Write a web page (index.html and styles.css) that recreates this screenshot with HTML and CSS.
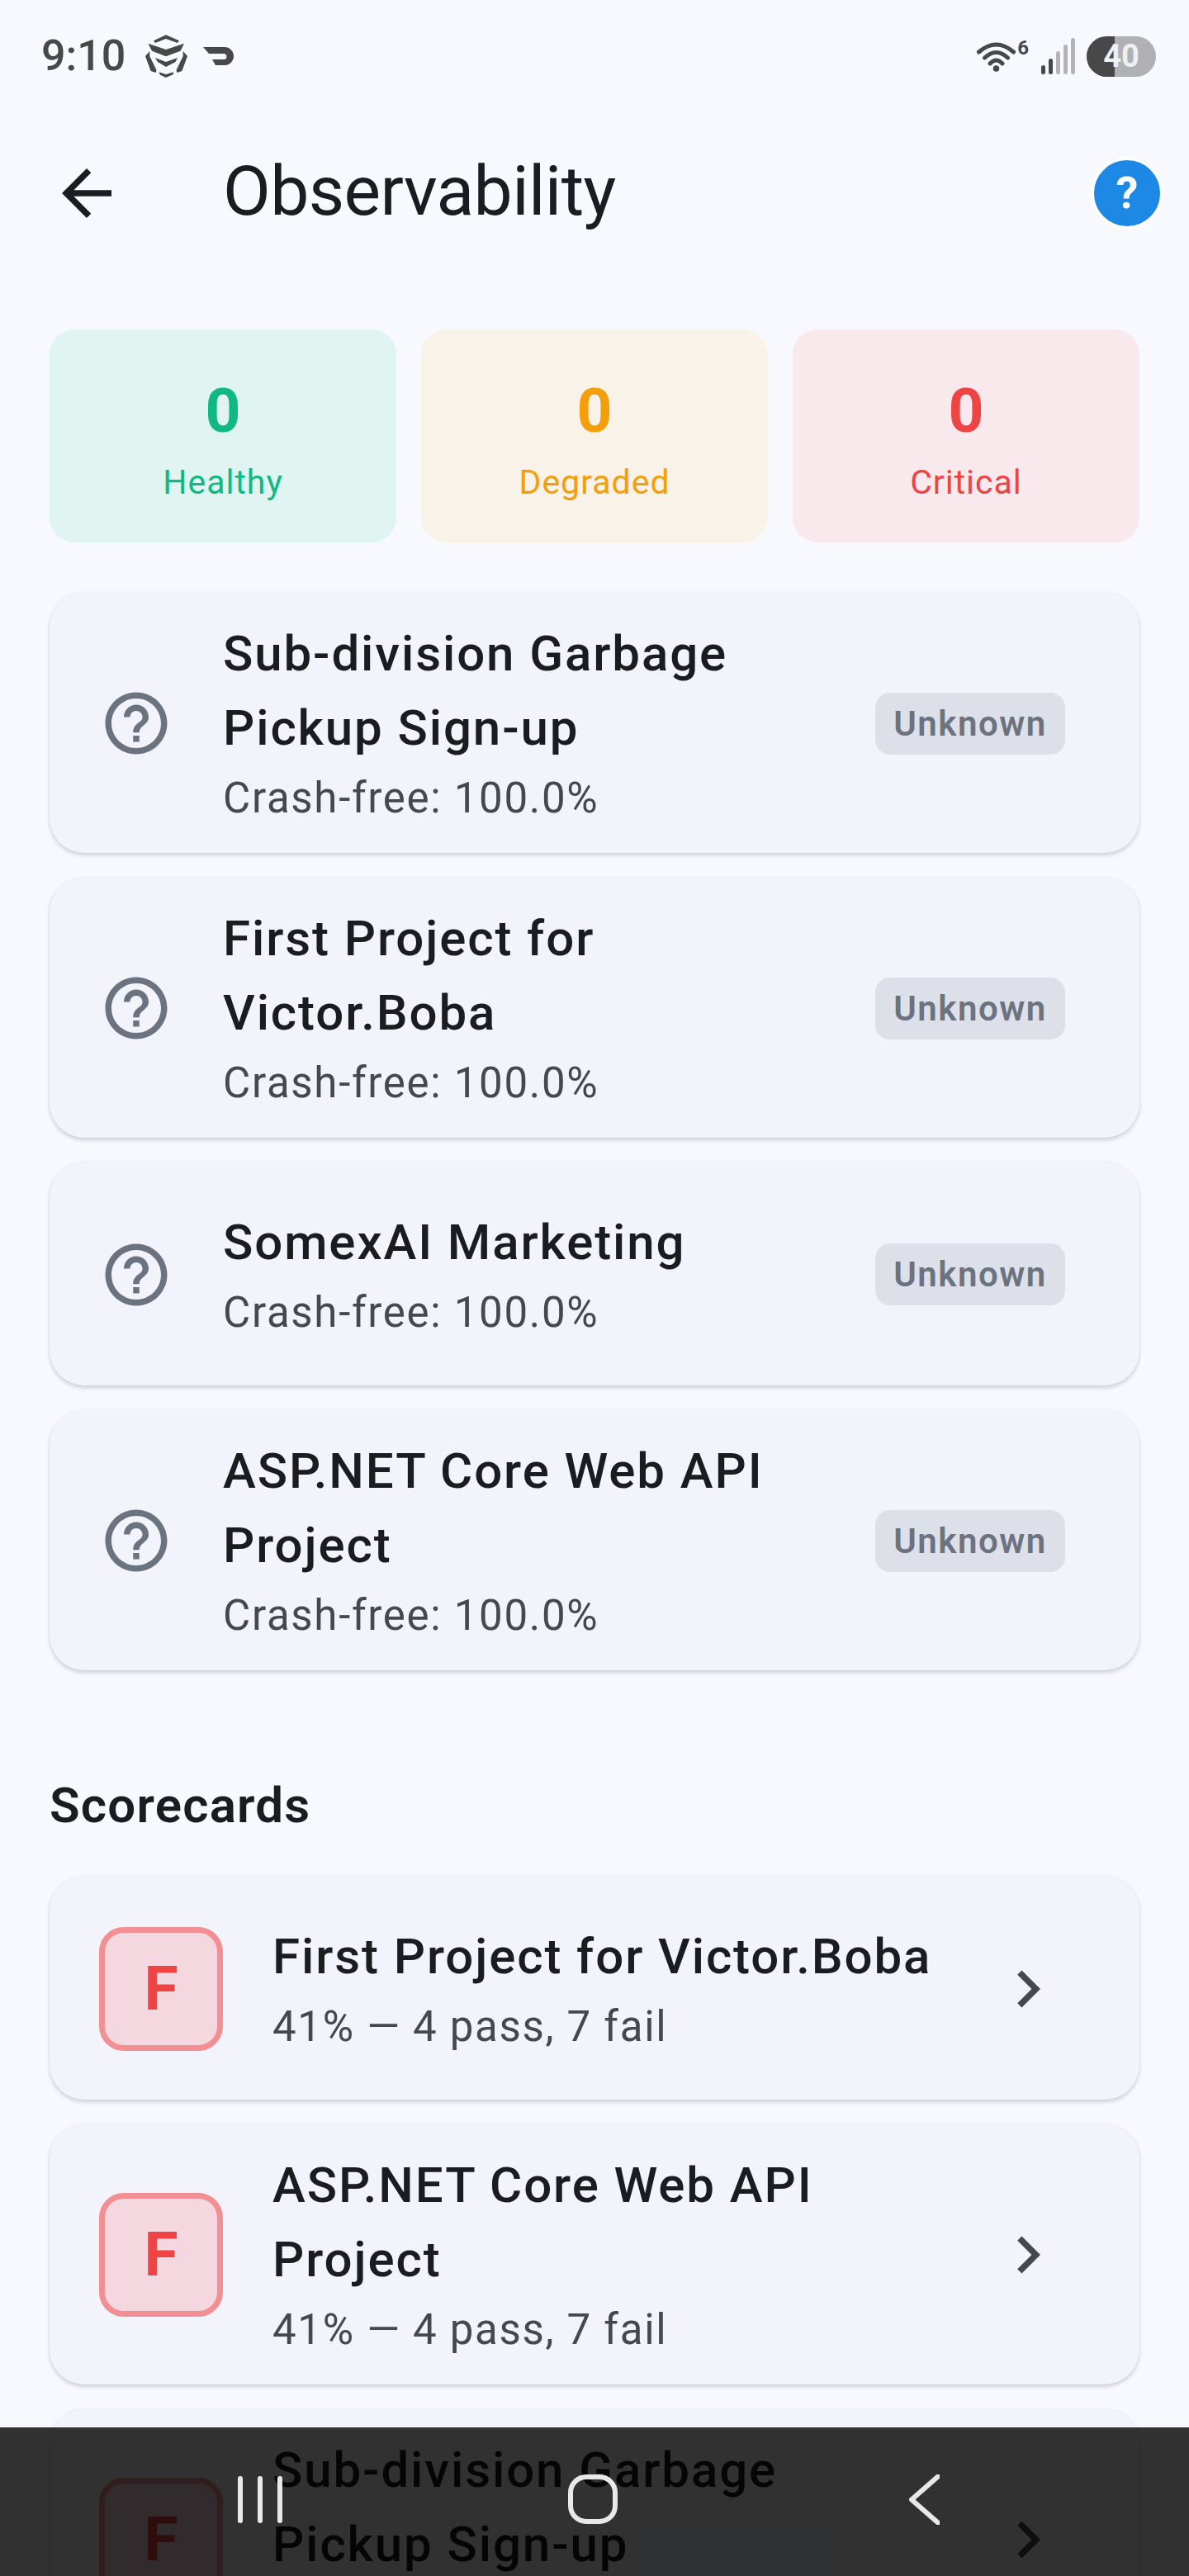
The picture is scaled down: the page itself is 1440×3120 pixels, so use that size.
FILE: index.html
```html
<!DOCTYPE html>
<html lang="en">
<head>
<meta charset="utf-8">
<title>Observability</title>
<link rel="stylesheet" href="styles.css">
</head>
<body>
<svg class="defs" width="0" height="0" aria-hidden="true">
  <symbol id="help" viewBox="0 0 24 24"><path d="M11 18h2v-2h-2v2zm1-16C6.48 2 2 6.48 2 12s4.48 10 10 10 10-4.48 10-10S17.52 2 12 2zm0 18c-4.41 0-8-3.59-8-8s3.59-8 8-8 8 3.59 8 8-3.59 8-8 8zm0-14c-2.21 0-4 1.79-4 4h2c0-1.1.9-2 2-2s2 .9 2 2c0 2-3 1.75-3 5h2c0-2.25 3-2.5 3-5 0-2.21-1.79-4-4-4z"/></symbol>
  <symbol id="chev" viewBox="0 0 24 24"><path d="M10 6 8.59 7.41 13.17 12l-4.58 4.59L10 18l6-6z"/></symbol>
</svg>
<div class="page">
  <div class="status">
    <div class="status-left">
      <span class="time">9:10</span>
      <svg class="ico-shield" viewBox="0 0 51 52"><path d="M10 7.3 25 .3 41 7.3 39 10 25 5 12 10zM3.4 10.7 25 18 47 10.7 42.5 19.7 25 26.3 8 19.7zM11.7 28 25 33 39 28 36.5 33 25 39 15 33zM16.3 45.3 25 48 34 45.3 34 48 25 52 18 48.7zM0 26 5.3 20 5.3 26 13.5 43 12.6 46 6.6 44zM51 26 45.7 20 45.7 26 37.5 43 38.4 46 44.4 44z"/></svg>
      <svg class="ico-dash" viewBox="0 0 37 22"><path d="M0 0H26a11 11 0 0 1 0 22H15L11 15H25a3.5 3.5 0 0 0 0-7H7z"/></svg>
    </div>
    <div class="status-right">
      <div class="wifi">
        <svg class="ico-wifi" viewBox="0 0 47 38"><path d="M2.500 14Q23.500-4 44.500 14M9.500 21Q23.500 8 37.500 21M16 28Q23.500 20 31 28"/><circle cx="23.500" cy="34" r="3.800"/></svg>
        <span class="wifi-six">6</span>
      </div>
      <div class="signal">
        <i class="bar bar-on b1"></i><i class="bar bar-on b2"></i><i class="bar b3"></i><i class="bar b4"></i><i class="bar b5"></i>
      </div>
      <div class="battery"><i class="battery-fill"></i><span class="battery-num">40</span></div>
    </div>
  </div>

  <header class="appbar">
    <svg class="ico-back" viewBox="0 0 24 24"><path d="M20 11H7.830l5.590-5.590L12 4l-8 8 8 8 1.410-1.410L7.830 13H20v-2z"/></svg>
    <h1 class="appbar-title">Observability</h1>
    <span class="help-btn">?</span>
  </header>

  <main class="content">
    <section class="stats">
      <div class="stat stat-green"><div class="stat-num">0</div><div class="stat-label">Healthy</div></div>
      <div class="stat stat-amber"><div class="stat-num">0</div><div class="stat-label">Degraded</div></div>
      <div class="stat stat-red"><div class="stat-num">0</div><div class="stat-label">Critical</div></div>
    </section>

    <section class="list">
      <article class="card">
        <svg class="ico-help"><use href="#help"/></svg>
        <div class="card-text"><div class="card-title">Sub-division Garbage Pickup Sign-up</div><div class="card-sub">Crash-free: 100.0%</div></div>
        <span class="badge">Unknown</span>
      </article>
      <article class="card">
        <svg class="ico-help"><use href="#help"/></svg>
        <div class="card-text"><div class="card-title">First Project for Victor.Boba</div><div class="card-sub">Crash-free: 100.0%</div></div>
        <span class="badge">Unknown</span>
      </article>
      <article class="card">
        <svg class="ico-help"><use href="#help"/></svg>
        <div class="card-text"><div class="card-title">SomexAI Marketing</div><div class="card-sub">Crash-free: 100.0%</div></div>
        <span class="badge">Unknown</span>
      </article>
      <article class="card">
        <svg class="ico-help"><use href="#help"/></svg>
        <div class="card-text"><div class="card-title">ASP.NET Core Web API Project</div><div class="card-sub">Crash-free: 100.0%</div></div>
        <span class="badge">Unknown</span>
      </article>
    </section>

    <h2 class="section-title">Scorecards</h2>

    <section class="list">
      <article class="card">
        <div class="grade">F</div>
        <div class="card-text"><div class="card-title">First Project for Victor.Boba</div><div class="card-sub">41% — 4 pass, 7 fail</div></div>
        <svg class="ico-chev"><use href="#chev"/></svg>
      </article>
      <article class="card">
        <div class="grade">F</div>
        <div class="card-text"><div class="card-title">ASP.NET Core Web API Project</div><div class="card-sub">41% — 4 pass, 7 fail</div></div>
        <svg class="ico-chev"><use href="#chev"/></svg>
      </article>
      <article class="card">
        <div class="grade">F</div>
        <div class="card-text"><div class="card-title">Sub-division Garbage Pickup Sign-up</div><div class="card-sub">41% — 4 pass, 7 fail</div></div>
        <svg class="ico-chev"><use href="#chev"/></svg>
      </article>
    </section>
  </main>

  <nav class="navbar">
    <div class="nav-recents"><i></i><i></i><i></i></div>
    <div class="nav-home"></div>
    <svg class="nav-back" viewBox="0 0 37 61"><path d="M35 2.500 3 30.500 35 58.500"/></svg>
  </nav>
</div>
</body>
</html>
```
FILE: styles.css
```css
* { box-sizing: border-box; }
html, body { margin: 0; padding: 0; }
body {
  width: 1440px;
  height: 3120px;
  overflow: hidden;
  background: #f8f9ff;
  font-family: Roboto, "Noto Sans", sans-serif;
  color: #1a1c20;
}
.defs { position: absolute; }
.page { position: relative; width: 1440px; height: 3120px; overflow: hidden; }

/* status bar */
.status {
  height: 136px;
  display: flex;
  align-items: center;
  justify-content: space-between;
  padding: 0 40px 0 50px;
}
.status-left { display: flex; align-items: center; }
.time { font-size: 52px; font-weight: 500; color: #484848; line-height: 52px; }
.ico-shield { width: 51px; height: 52px; margin-left: 24px; fill: #484848; }
.ico-dash { width: 37px; height: 22px; margin-left: 19px; fill: #484848; }
.status-right { display: flex; align-items: center; }
.wifi { display: flex; align-items: flex-start; height: 38px; }
.ico-wifi { width: 47px; height: 38px; fill: #484848; stroke: none; }
.ico-wifi path { fill: none; stroke: #484848; stroke-width: 5; stroke-linecap: round; }
.wifi-six { font-size: 24px; font-weight: 700; line-height: 18px; color: #484848; margin-left: 2px; }
.signal { display: flex; align-items: flex-end; gap: 4px; height: 44px; margin-left: 15px; }
.bar { display: block; width: 5px; border-radius: 3px; background: #b4b4b8; }
.bar-on { background: #484848; }
.b1 { height: 11px; }
.b2 { height: 19px; }
.b3 { height: 28px; }
.b4 { height: 36px; }
.b5 { height: 44px; }
.battery {
  position: relative;
  width: 84px;
  height: 49px;
  margin-left: 14px;
  border-radius: 25px;
  overflow: hidden;
  background: #b0b1b5;
  display: flex;
  align-items: center;
  justify-content: center;
}
.battery-fill { position: absolute; left: 0; top: 0; bottom: 0; width: 34px; background: #484848; }
.battery-num { position: relative; font-size: 38px; font-weight: 700; line-height: 1; color: #f0f0f2; }

/* app bar */
.appbar {
  height: 196px;
  display: flex;
  align-items: center;
  padding: 0 31px 0 60px;
}
.ico-back { width: 90px; height: 90px; fill: #1a1c20; flex: none; }
.appbar-title { flex: 1; margin: 0 0 5px 120px; font-size: 84px; font-weight: 400; line-height: 100px; letter-spacing: -.6px; color: #1a1c20; }
.help-btn {
  width: 88px;
  height: 88px;
  border-radius: 50%;
  background: #1e88e5;
  border: 4px solid #fff;
  color: #fff;
  font-size: 54px;
  font-weight: 700;
  line-height: 80px;
  text-align: center;
}

/* stats */
.content { padding: 67px 60px 0; }
.stats { display: grid; grid-template-columns: repeat(3, 1fr); gap: 30px; }
.stat {
  height: 258px;
  border-radius: 30px;
  display: flex;
  flex-direction: column;
  align-items: center;
  padding-top: 54px;
}
.stat-num { font-size: 75px; font-weight: 700; line-height: 88px; }
.stat-label { font-size: 41px; line-height: 50px; margin-top: 18px; letter-spacing: 1px; }
.stat-green { background: #e0f4f2; color: #10b981; }
.stat-amber { background: #f8f2e8; color: #f59e0b; }
.stat-red { background: #f9e8ec; color: #ef4444; }

/* lists */
.list { display: flex; flex-direction: column; gap: 29px; margin-top: 60px; }
.card {
  min-height: 271px;
  display: flex;
  align-items: center;
  padding: 30px 90px 28px 60px;
  border-radius: 42px;
  background: #f2f3fb;
  box-shadow: 0 3px 5px rgba(0, 0, 0, .16), 0 0 2px rgba(0, 0, 0, .05);
}
.ico-help { width: 90px; height: 90px; fill: #6b7280; flex: none; margin-right: 60px; }
.card-text { flex: 1; min-width: 0; }
.ico-help ~ .card-text { padding-right: 20px; }
.grade ~ .card-text { padding-right: 70px; }
.card-title { font-size: 60px; font-weight: 500; line-height: 90px; letter-spacing: 1.9px; color: #1a1c20; }
.card-sub { padding-top: 2px; font-size: 51px; line-height: 76px; letter-spacing: 1.7px; color: #444851; }
.badge {
  flex: none;
  width: 230px;
  height: 75px;
  border-radius: 18px;
  background: #dde0e8;
  color: #6b7280;
  font-size: 42px;
  font-weight: 600;
  line-height: 75px;
  letter-spacing: 1.5px;
  text-align: center;
}
.section-title { margin: 124px 0 0; font-size: 60px; font-weight: 600; line-height: 80px; letter-spacing: 1.2px; color: #1a1c20; }
.section-title + .list { margin-top: 45px; }
.grade {
  flex: none;
  width: 150px;
  height: 150px;
  margin-right: 60px;
  border-radius: 30px;
  border: 7px solid #f28f92;
  background: #f5d8df;
  color: #ef4444;
  font-size: 75px;
  font-weight: 700;
  line-height: 134px;
  text-align: center;
}
.ico-chev { width: 90px; height: 90px; fill: #444851; flex: none; }

/* nav */
.navbar {
  position: absolute;
  left: 0;
  right: 0;
  bottom: 0;
  height: 180px;
  background: rgba(0, 0, 0, .8);
  display: flex;
  align-items: center;
  padding: 0 0 6px 288px;
}
.nav-recents { display: flex; gap: 18px; }
.nav-recents i { display: block; width: 6px; height: 57px; border-radius: 3px; background: #e8e8e8; }
.nav-home { width: 60px; height: 60px; margin-left: 346px; border: 6px solid #e8e8e8; border-radius: 22px; }
.nav-back { width: 37px; height: 61px; margin-left: 353px; fill: none; stroke: #e8e8e8; stroke-width: 6; stroke-linecap: round; stroke-linejoin: round; }
```
